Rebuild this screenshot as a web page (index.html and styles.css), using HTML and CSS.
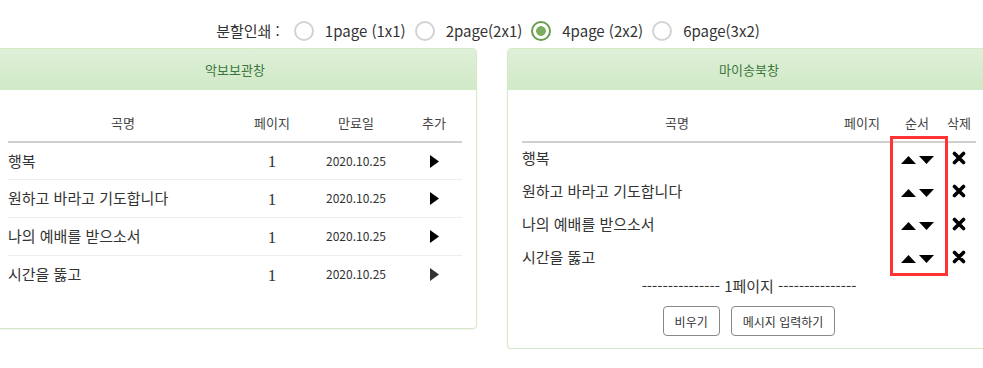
FILE: index.html
```html
<!DOCTYPE html>
<html lang="ko">
<head>
    <meta charset="UTF-8">
    <meta name="viewport" content="width=device-width, initial-scale=1.0">
    <title>분할인쇄</title>
    <link rel="stylesheet" href="styles.css">
</head>
<body>

<div class="print-bar">
    <span class="print-label">분할인쇄 :</span>
    <label class="radio"><span class="dot"></span>1page (1x1)</label>
    <label class="radio"><span class="dot"></span>2page(2x1)</label>
    <label class="radio"><span class="dot on"></span>4page (2x2)</label>
    <label class="radio"><span class="dot"></span>6page(3x2)</label>
</div>

<div class="row">
    <div class="panel">
        <div class="panel-heading">악보보관창</div>
        <div class="panel-body">
            <table class="list store">
                <thead>
                    <tr>
                        <th class="c-title">곡명</th>
                        <th class="c-page">페이지</th>
                        <th class="c-date">만료일</th>
                        <th class="c-add">추가</th>
                    </tr>
                </thead>
                <tbody>
                    <tr>
                        <td>행복</td>
                        <td class="num">1</td>
                        <td class="date">2020.10.25</td>
                        <td class="c-add"><svg width="9" height="13" viewBox="0 0 9 13"><path d="M0 0 L9 6.5 L0 13 Z" fill="#000"/></svg></td>
                    </tr>
                    <tr>
                        <td>원하고 바라고 기도합니다</td>
                        <td class="num">1</td>
                        <td class="date">2020.10.25</td>
                        <td class="c-add"><svg width="9" height="13" viewBox="0 0 9 13"><path d="M0 0 L9 6.5 L0 13 Z" fill="#000"/></svg></td>
                    </tr>
                    <tr>
                        <td>나의 예배를 받으소서</td>
                        <td class="num">1</td>
                        <td class="date">2020.10.25</td>
                        <td class="c-add"><svg width="9" height="13" viewBox="0 0 9 13"><path d="M0 0 L9 6.5 L0 13 Z" fill="#000"/></svg></td>
                    </tr>
                    <tr>
                        <td>시간을 뚫고</td>
                        <td class="num">1</td>
                        <td class="date">2020.10.25</td>
                        <td class="c-add"><svg width="9" height="13" viewBox="0 0 9 13"><path d="M0 0 L9 6.5 L0 13 Z" fill="#333"/></svg></td>
                    </tr>
                </tbody>
            </table>
        </div>
    </div>

    <div class="panel">
        <div class="panel-heading">마이송북창</div>
        <div class="panel-body">
            <table class="list book">
                <thead>
                    <tr>
                        <th class="b-title">곡명</th>
                        <th class="b-page">페이지</th>
                        <th class="b-order">순서</th>
                        <th class="b-del">삭제</th>
                    </tr>
                </thead>
                <tbody>
                    <tr>
                        <td>행복</td>
                        <td></td>
                        <td class="b-order"><span class="arrows"><svg width="15" height="8" viewBox="0 0 15 8"><path d="M7.5 0 L15 8 L0 8 Z"/></svg><svg width="15" height="8" viewBox="0 0 15 8"><path d="M0 0 L15 0 L7.5 8 Z"/></svg></span></td>
                        <td class="b-del"><svg width="14" height="14" viewBox="0 0 14 14"><path d="M2.5 2.5 L11.5 11.5 M11.5 2.5 L2.5 11.5" stroke="#000" stroke-width="3.6" stroke-linecap="round"/></svg></td>
                    </tr>
                    <tr>
                        <td>원하고 바라고 기도합니다</td>
                        <td></td>
                        <td class="b-order"><span class="arrows"><svg width="15" height="8" viewBox="0 0 15 8"><path d="M7.5 0 L15 8 L0 8 Z"/></svg><svg width="15" height="8" viewBox="0 0 15 8"><path d="M0 0 L15 0 L7.5 8 Z"/></svg></span></td>
                        <td class="b-del"><svg width="14" height="14" viewBox="0 0 14 14"><path d="M2.5 2.5 L11.5 11.5 M11.5 2.5 L2.5 11.5" stroke="#000" stroke-width="3.6" stroke-linecap="round"/></svg></td>
                    </tr>
                    <tr>
                        <td>나의 예배를 받으소서</td>
                        <td></td>
                        <td class="b-order"><span class="arrows"><svg width="15" height="8" viewBox="0 0 15 8"><path d="M7.5 0 L15 8 L0 8 Z"/></svg><svg width="15" height="8" viewBox="0 0 15 8"><path d="M0 0 L15 0 L7.5 8 Z"/></svg></span></td>
                        <td class="b-del"><svg width="14" height="14" viewBox="0 0 14 14"><path d="M2.5 2.5 L11.5 11.5 M11.5 2.5 L2.5 11.5" stroke="#000" stroke-width="3.6" stroke-linecap="round"/></svg></td>
                    </tr>
                    <tr>
                        <td>시간을 뚫고</td>
                        <td></td>
                        <td class="b-order"><span class="arrows"><svg width="15" height="8" viewBox="0 0 15 8"><path d="M7.5 0 L15 8 L0 8 Z"/></svg><svg width="15" height="8" viewBox="0 0 15 8"><path d="M0 0 L15 0 L7.5 8 Z"/></svg></span></td>
                        <td class="b-del"><svg width="14" height="14" viewBox="0 0 14 14"><path d="M2.5 2.5 L11.5 11.5 M11.5 2.5 L2.5 11.5" stroke="#000" stroke-width="3.6" stroke-linecap="round"/></svg></td>
                    </tr>
                </tbody>
            </table>
            <div class="mark"></div>
            <p class="page-sep">--------------- 1페이지 ---------------</p>
            <div class="buttons">
                <button class="btn">비우기</button>
                <button class="btn">메시지 입력하기</button>
            </div>
        </div>
    </div>
</div>

</body>
</html>
```

FILE: styles.css
```css
body {
    font-family: "Noto Sans CJK KR", "Noto Sans", sans-serif;
    color: #333;
    background: #fff;
    margin: 0;
    overflow: hidden;
}
.print-bar {
    display: flex;
    justify-content: center;
    align-items: center;
    padding-top: 20px;
    height: 22px;
    font-size: 15px;
    line-height: 22px;
    margin-bottom: 6px;
}
.print-label {
    margin-right: 12px;
}
.radio {
    display: flex;
    align-items: center;
    margin-right: 7px;
}
.dot {
    box-sizing: border-box;
    width: 20px;
    height: 20px;
    border: 2px solid #d3d3d3;
    border-radius: 50%;
    margin-right: 11px;
    margin-left: 2px;
}
.dot.on {
    border-color: #6a9c4e;
    background: radial-gradient(circle, #7cad5e 0 4.5px, #fff 5.2px);
}
.row {
    display: flex;
    align-items: flex-start;
    margin-left: -7px;
    gap: 30px;
}
.panel {
    position: relative;
    box-sizing: border-box;
    flex: 0 0 484px;
    border: 1px solid #d6e9c6;
    border-radius: 4px;
    box-shadow: 0 1px 2px rgba(0, 0, 0, 0.06);
    background: #fff;
}
.panel-heading {
    height: 41px;
    line-height: 41px;
    text-align: center;
    font-size: 13px;
    color: #3c763d;
    background: linear-gradient(#dff0d8, #d0e9c6);
    border-radius: 3px 3px 0 0;
}
.panel-body {
    padding: 15px 14px 12px;
}
.list {
    width: 100%;
    border-collapse: collapse;
    table-layout: fixed;
}
.list th {
    height: 36px;
    padding: 0;
    font-weight: normal;
    font-size: 13px;
    line-height: 18px;
    color: #444;
    border-bottom: 2px solid #cfcfcf;
    vertical-align: middle;
}
.list td {
    padding: 0;
    font-size: 15px;
    line-height: 20px;
    vertical-align: middle;
}
.store {
    margin-bottom: 23px;
}
.store td {
    height: 36px;
    padding-bottom: 1px;
    border-top: 1px solid #eee;
}
.store tbody tr:first-child td {
    border-top: none;
    height: 35px;
}
.c-title { width: 230px; }
.c-page { width: 68px; }
.c-date { width: 100px; }
.c-add { text-align: center; }
.store .c-add svg {
    display: block;
    margin: 1px auto 0;
}
.store td.num {
    text-align: center;
    font-family: "Liberation Serif", serif;
    font-size: 17px;
    height: 35px;
    padding: 2px 0 0;
}
.store tbody tr:first-child td.num {
    height: 34px;
}
.store td.date {
    text-align: center;
    font-size: 12px;
}
.book td {
    height: 30px;
    padding-bottom: 3px;
}
.b-title { width: 310px; }
.b-page { width: 60px; }
.b-order { width: 50px; }
.b-del { text-align: center; }
.book td.b-order {
    text-align: center;
}
.arrows {
    display: inline-flex;
    gap: 3px;
    vertical-align: middle;
}
.arrows svg {
    display: block;
}
.book td.b-del svg {
    display: block;
    margin: 0 auto;
}
.mark {
    position: absolute;
    left: 382px;
    top: 87px;
    width: 52px;
    height: 134px;
    border: 3px solid #f33;
}
.page-sep {
    margin: 0;
    text-align: center;
    font-size: 15px;
    line-height: 22px;
}
.buttons {
    display: flex;
    justify-content: center;
    gap: 11px;
    margin-top: 9px;
}
.btn {
    height: 30px;
    padding: 0 11px;
    font-family: inherit;
    font-size: 12px;
    color: #333;
    background: #fff;
    border: 1px solid #888;
    border-radius: 4px;
}
```
